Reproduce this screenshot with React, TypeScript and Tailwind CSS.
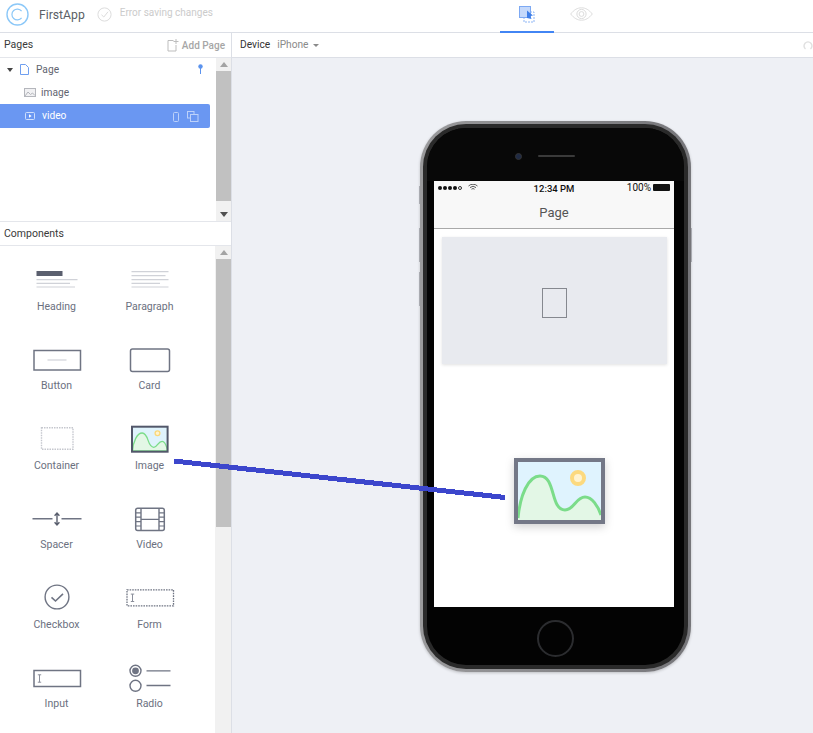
import React from 'react';

const stroke = '#6f7483';

const Heading = () => (
  <>
    <rect x="11.5" y="10" width="26" height="5" fill="#5a5f6e" />
    <path d="M11.5 18.7H52.5M11.5 22.3H45M11.5 26H50" stroke="#d0d2d8" strokeWidth="1.2" />
  </>
);
const Paragraph = () => (
  <path d="M13.5 10.7H50.5M13.5 14.7H47.5M13.5 18.7H50.5M13.5 22.3H42M13.5 26H50.5" stroke="#d0d2d8" strokeWidth="1.2" />
);
const ButtonIcon = () => (
  <>
    <rect x="9" y="9.5" width="46.5" height="19.5" fill="#fff" stroke={stroke} strokeWidth="1.5" />
    <path d="M22.5 19H41.5" stroke="#d0d2d8" strokeWidth="1.2" />
  </>
);
const Card = () => <rect x="12.5" y="8" width="39" height="22.5" rx="2" fill="#fff" stroke={stroke} strokeWidth="1.5" />;
const Container = () => (
  <rect x="16.5" y="7.8" width="31.5" height="21.5" fill="none" stroke="#c5c7ce" strokeWidth="1.4" strokeDasharray="1.5 1" />
);
const ImageIcon = () => (
  <>
    <rect x="14" y="6.7" width="35.6" height="25" fill="#dff3fc" />
    <path d="M14.5 31C15 22 19 13 24.2 13C31 13 29 27.3 35.8 27.3C39.5 27.3 40 21.3 44.2 21.3C46.5 21.3 48 24.5 49.2 29V31Z" fill="#e3f7e6" stroke="#7bdc8a" strokeWidth="1.3" />
    <circle cx="39.5" cy="13.3" r="2.4" fill="#fff3cf" stroke="#fbd878" strokeWidth="1.3" />
    <rect x="14" y="6.7" width="35.6" height="25" fill="none" stroke="#52576a" strokeWidth="2" />
  </>
);
const Spacer = () => (
  <>
    <path d="M7.5 18.8H27.5M36.5 18.8H56.5" stroke={stroke} strokeWidth="1.4" />
    <path d="M32 13.5V24.5M29.6 15.8L32 13L34.4 15.8M29.6 22.2L32 25L34.4 22.2" fill="none" stroke="#5a5f6e" strokeWidth="1.4" />
  </>
);
const VideoIcon = () => (
  <>
    <rect x="17.7" y="8.2" width="28.6" height="22.4" rx="2" fill="#fff" stroke={stroke} strokeWidth="1.5" />
    <path d="M23 8.2V30.6M41 8.2V30.6M23 19.4H41" stroke={stroke} strokeWidth="1.4" />
    <path d="M17.7 12.8H23M17.7 17.2H23M17.7 21.6H23M17.7 26H23M41 12.8H46.3M41 17.2H46.3M41 21.6H46.3M41 26H46.3" stroke={stroke} strokeWidth="1.2" />
  </>
);
const Checkbox = () => (
  <>
    <circle cx="32" cy="18" r="11.9" fill="#fff" stroke={stroke} strokeWidth="1.4" />
    <path d="M26.5 18.3L30.5 22L38 14.8" fill="none" stroke={stroke} strokeWidth="1.6" />
  </>
);
const Cursor = ({y}: {y: number}) => (
  <path d={`M12.8 ${y - 3.7}H16.2M12.8 ${y + 3.7}H16.2M14.5 ${y - 3.7}V${y + 3.7}`} stroke="#8b8f9b" strokeWidth="1" fill="none" />
);
const Form = () => (
  <>
    <rect x="9" y="10.8" width="46.5" height="16" fill="#fff" stroke={stroke} strokeWidth="1.3" strokeDasharray="1.6 1" />
    <Cursor y={18.8} />
  </>
);
const InputIcon = () => (
  <>
    <rect x="9" y="11.5" width="46.5" height="16" fill="#fff" stroke={stroke} strokeWidth="1.5" />
    <Cursor y={19.5} />
  </>
);
const Radio = () => (
  <>
    <circle cx="17.5" cy="11.8" r="5.5" fill="#fff" stroke={stroke} strokeWidth="1.4" />
    <circle cx="17.5" cy="11.8" r="3.4" fill={stroke} />
    <circle cx="17.5" cy="26.8" r="5.5" fill="#fff" stroke={stroke} strokeWidth="1.4" />
    <path d="M28.5 11.8H52.5M28.5 26.5H52.5" stroke={stroke} strokeWidth="1.3" />
  </>
);

const components: {label: string; icon: React.ReactNode}[] = [
  {label: 'Heading', icon: <Heading />},
  {label: 'Paragraph', icon: <Paragraph />},
  {label: 'Button', icon: <ButtonIcon />},
  {label: 'Card', icon: <Card />},
  {label: 'Container', icon: <Container />},
  {label: 'Image', icon: <ImageIcon />},
  {label: 'Spacer', icon: <Spacer />},
  {label: 'Video', icon: <VideoIcon />},
  {label: 'Checkbox', icon: <Checkbox />},
  {label: 'Form', icon: <Form />},
  {label: 'Input', icon: <InputIcon />},
  {label: 'Radio', icon: <Radio />},
];

const ScrollArrow = ({down}: {down?: boolean}) => (
  <div className="h-[13px] flex items-center justify-center">
    <svg width="8" height="5" viewBox="0 0 8 5">
      <path d={down ? 'M0 0H8L4 5Z' : 'M0 5H8L4 0Z'} fill={down ? '#505050' : '#a3a3a3'} />
    </svg>
  </div>
);

const Header = () => (
  <header className="h-[33px] shrink-0 bg-white border-b border-[#dcdfe6] flex items-center pl-[6px] relative">
    <svg width="23" height="23" viewBox="0 0 23 23" className="mt-[-3px]">
      <circle cx="11.5" cy="11.5" r="10.5" fill="none" stroke="#8cc8f8" strokeWidth="1.4" />
      <path d="M15.6 8.2A5.4 5.4 0 1 0 15.6 14.8" fill="none" stroke="#8cc8f8" strokeWidth="1.2" />
    </svg>
    <span className="ml-[10px] mt-[-2px] text-[12.2px] text-[#5b5f66]">FirstApp</span>
    <svg width="15" height="15" viewBox="0 0 15 15" className="ml-[12px] mt-[-3px]">
      <circle cx="7.5" cy="7.5" r="6.6" fill="none" stroke="#dcdcdc" strokeWidth="1" />
      <path d="M4.5 7.8L6.8 10L11 4.8" fill="none" stroke="#dcdcdc" strokeWidth="1" />
    </svg>
    <span className="ml-[8px] mt-[-7px] text-[10px] text-[#cbcbcb]">Error saving changes</span>
    <div className="absolute left-[500px] top-0 w-[54px] h-[33px] border-b-2 border-[#4285f4] flex justify-center pt-[6px]">
      <svg width="16" height="17" viewBox="0 0 16 17">
        <rect x="5" y="6" width="10" height="10" fill="none" stroke="#8db5f5" strokeDasharray="2 1" />
        <rect x="0.5" y="0.5" width="11" height="11" fill="#c5d9fb" stroke="#7da9f3" />
        <path d="M8 4.5L14 9.5L11.5 10L12.5 13L8 12Z" fill="#3f7fe8" />
      </svg>
    </div>
    <svg width="23" height="14" viewBox="0 0 23 14" className="absolute left-[570px] top-[7px]">
      <path d="M0.7 7C4 2.8 7.5 0.8 11.5 0.8S19 2.8 22.3 7C19 11.2 15.5 13.2 11.5 13.2S4 11.2 0.7 7Z" fill="none" stroke="#dcdcdc" />
      <circle cx="11.5" cy="7" r="4.6" fill="none" stroke="#dcdcdc" />
      <circle cx="11.5" cy="7" r="2.4" fill="none" stroke="#dcdcdc" />
    </svg>
  </header>
);

const PagesPanel = () => (
  <>
    <div className="h-[25px] border-b border-[#e4e6eb] flex items-center justify-between px-[4px] pr-[6px] text-[10.5px]">
      <span className="text-[#3a3a3a]">Pages</span>
      <span className="flex items-center gap-[3px] text-[#a6a6a6] text-[10px] font-medium">
        <svg width="12" height="13" viewBox="0 0 12 13">
          <path d="M6.5 1.5H1V12H9V6M9 0V5M6.5 2.5H11.5" fill="none" stroke="#bdbdbd" />
        </svg>
        Add Page
      </span>
    </div>
    <div className="h-[164px] flex border-b border-[#e4e6eb]">
      <div className="w-[216px] pr-[6px] text-[10.2px]">
        <div className="h-[23px] flex items-center pl-[7px] relative text-[#5f6470]">
          <svg width="6" height="4" viewBox="0 0 6 4">
            <path d="M0 0H6L3 4Z" fill="#444" />
          </svg>
          <svg width="9" height="11" viewBox="0 0 9 11" className="ml-[7px]">
            <path d="M0.5 0.5H5.5L8.5 3.5V10.5H0.5Z" fill="none" stroke="#6f9ff0" />
          </svg>
          <span className="ml-[7px]">Page</span>
          <svg width="5" height="10" viewBox="0 0 5 10" className="absolute left-[198px] top-[6px]">
            <circle cx="2.5" cy="2.5" r="2.2" fill="#5b93ee" />
            <path d="M2.5 4V10" stroke="#5b93ee" />
          </svg>
        </div>
        <div className="h-[23px] flex items-center pl-[24px] text-[#5f6470]">
          <svg width="12" height="9" viewBox="0 0 12 9">
            <rect x="0.5" y="0.5" width="11" height="8" fill="#f1f1f3" stroke="#b4b6bc" />
            <path d="M1 8L4 4L6.5 6.5L8.5 5L11 7.5" fill="none" stroke="#b4b6bc" />
          </svg>
          <span className="ml-[5px]">image</span>
        </div>
        <div className="h-[24px] bg-[#6a97f2] rounded-r-[2px] flex items-center pl-[25px] pr-[9px] text-white">
          <svg width="10" height="8" viewBox="0 0 10 8">
            <rect x="0.5" y="0.5" width="9" height="7" rx="1" fill="none" stroke="#cfdffc" />
            <path d="M4 2.2L6.6 4L4 5.8Z" fill="#fff" />
          </svg>
          <span className="ml-[7px] flex-1">video</span>
          <svg width="29" height="11" viewBox="0 0 29 11">
            <rect x="1.5" y="1.5" width="5" height="9" rx="1" fill="none" stroke="#bcd1fa" />
            <rect x="15.5" y="0.5" width="6.5" height="6.5" fill="none" stroke="#bcd1fa" />
            <rect x="18.5" y="3.5" width="7.5" height="7" fill="#6a97f2" stroke="#bcd1fa" />
          </svg>
        </div>
      </div>
      <div className="w-[15px] bg-[#f1f1f1] flex flex-col">
        <ScrollArrow />
        <div className="h-[130px] bg-[#c1c1c1]" />
        <div className="flex-1" />
        <ScrollArrow down />
      </div>
    </div>
  </>
);

const ComponentsPanel = () => (
  <>
    <div className="h-[24px] border-b border-[#e4e6eb] flex items-center px-[4px] text-[10.5px] text-[#3a3a3a]">
      Components
    </div>
    <div className="flex flex-1 min-h-0">
      <div className="w-[215px] pl-[10px] pt-[15px] grid grid-cols-[93px_93px] auto-rows-[79.5px]">
        {components.map((c) => (
          <div key={c.label} className="flex flex-col items-center">
            <svg width="64" height="38" viewBox="0 0 64 38">
              {c.icon}
            </svg>
            <span className="text-[10.5px] leading-[13px] mt-[0.5px] text-[#6b7080]">{c.label}</span>
          </div>
        ))}
      </div>
      <div className="w-[16px] bg-[#f1f1f1] flex flex-col pl-[1px]">
        <ScrollArrow />
        <div className="h-[268px] bg-[#c1c1c1]" />
      </div>
    </div>
  </>
);

const SideButton = ({className}: {className: string}) => (
  <div className={`absolute left-[-1px] w-[1px] bg-[#a9abb1] ${className}`} />
);

const Phone = () => (
  <div className="relative w-[271px] h-[551px] ml-[188px] mt-[63px] rounded-[46px] bg-gradient-to-r from-[#9a9a9c] to-[#76767a] p-[3px] shadow-[0_1px_3px_rgba(0,0,0,0.2)]">
    <SideButton className="top-[65px] h-[18px]" />
    <SideButton className="top-[107px] h-[34px]" />
    <SideButton className="top-[151px] h-[34px]" />
    <div className="absolute right-[-1px] top-[107px] w-[1px] h-[34px] bg-[#a9abb1]" />
    <div className="h-full rounded-[43px] bg-[#2a2a2a] p-[4px]">
      <div className="h-full rounded-[39px] bg-[#030303] flex flex-col items-center overflow-hidden">
        <div className="w-full h-[53px] shrink-0 bg-[#080808] flex items-center justify-center gap-[16px] pr-[22px] pt-[3px]">
          <div className="w-[7px] h-[7px] rounded-full bg-[#1f2a44] border border-[#333]" />
          <div className="w-[37px] h-[2px] rounded-full bg-[#3a3a3a]" />
        </div>
        <Screen />
        <div className="mt-[13px] w-[37px] h-[37px] rounded-full border-2 border-[#2b2c2f]" />
      </div>
    </div>
  </div>
);

const Screen = () => (
  <div className="w-[240px] h-[426px] shrink-0 mr-[3px] bg-white flex flex-col">
    <div className="h-[48px] bg-[#f8f8f8] border-b border-[#a9a9a9] shrink-0">
      <div className="h-[13px] flex items-center justify-between px-[4px] text-[9.5px] text-[#111]">
        <span className="flex items-center gap-[1px] w-[70px]">
          <i className="w-[4px] h-[4px] rounded-full bg-[#111]" />
          <i className="w-[4px] h-[4px] rounded-full bg-[#111]" />
          <i className="w-[4px] h-[4px] rounded-full bg-[#111]" />
          <i className="w-[4px] h-[4px] rounded-full bg-[#111]" />
          <i className="w-[4px] h-[4px] rounded-full border border-[#333]" />
          <svg width="10" height="7" viewBox="0 0 10 7" className="ml-[5px]">
            <path d="M0.5 2A6.5 6.5 0 0 1 9.5 2M2 3.6A4.4 4.4 0 0 1 8 3.6M3.5 5.2A2.2 2.2 0 0 1 6.5 5.2" fill="none" stroke="#333" strokeWidth="0.8" />
          </svg>
        </span>
        <span className="font-medium mt-[3px]">12:34 PM</span>
        <span className="flex items-center justify-end gap-[2px] w-[70px] text-[10px]">
          100%
          <i className="w-[17px] h-[7px] rounded-[1px] bg-[#111]" />
        </span>
      </div>
      <div className="text-center text-[13px] leading-[18px] mt-[10px] text-[#555]">Page</div>
    </div>
    <div className="mt-[8px] mx-[8px] w-[225px] h-[127px] shrink-0 bg-[#e8eaef] shadow-[0_1px_3px_rgba(0,0,0,0.12)] flex items-center justify-center pt-[4px]">
      <div className="w-[25px] h-[30px] border border-[#85888f]" />
    </div>
    <svg width="91" height="66" viewBox="0 0 91 66" className="mt-[94px] ml-[80px] shrink-0 drop-shadow-[0_3px_4px_rgba(0,0,0,0.18)]">
      <rect x="2" y="2" width="87" height="62" fill="#dff3fe" />
      <path d="M4 60C6 38 14 18 26 18C42 18 36 52 51 52C60 52 62 39 71 39C78 39 84 48 87 57V62H4Z" fill="#e3f7e6" />
      <path d="M4 60C6 38 14 18 26 18C42 18 36 52 51 52C60 52 62 39 71 39C78 39 84 48 87 57" fill="none" stroke="#7bdc8a" strokeWidth="3" />
      <circle cx="64" cy="20" r="6" fill="#fff3cf" stroke="#fcd97e" strokeWidth="4" />
      <rect x="2" y="2" width="87" height="62" fill="none" stroke="#747887" strokeWidth="4" />
    </svg>
  </div>
);

export default function App() {
  return (
    <div className="relative w-[813px] h-[733px] overflow-hidden flex flex-col bg-white font-['Roboto',sans-serif]">
      <Header />
      <div className="flex flex-1 min-h-0">
        <aside className="w-[232px] shrink-0 border-r border-[#dcdfe6] flex flex-col bg-white">
          <PagesPanel />
          <ComponentsPanel />
        </aside>
        <main className="flex-1 bg-[#eef0f5]">
          <div className="h-[25px] bg-white border-b border-[#dcdfe6] flex items-center pl-[8px] text-[10.2px] relative">
            <span className="text-[#333]">Device</span>
            <span className="ml-[7px] text-[#8a8a8a]">iPhone</span>
            <svg width="6" height="3" viewBox="0 0 6 3" className="ml-[4px]">
              <path d="M0 0H6L3 3Z" fill="#8a8a8a" />
            </svg>
            <svg width="10" height="10" viewBox="0 0 10 10" className="absolute right-0 top-[7px]">
              <path d="M2.5 9A4 4 0 1 1 7.5 9" fill="none" stroke="#e0e0e0" strokeWidth="1.4" />
            </svg>
          </div>
          <Phone />
        </main>
      </div>
      {/* drag line from the palette to the dropped image */}
      <svg width="813" height="733" className="absolute inset-0 pointer-events-none">
        <path d="M174 461L505 497.5" stroke="#3c46cc" strokeWidth="5" shapeRendering="crispEdges" />
      </svg>
    </div>
  );
}
